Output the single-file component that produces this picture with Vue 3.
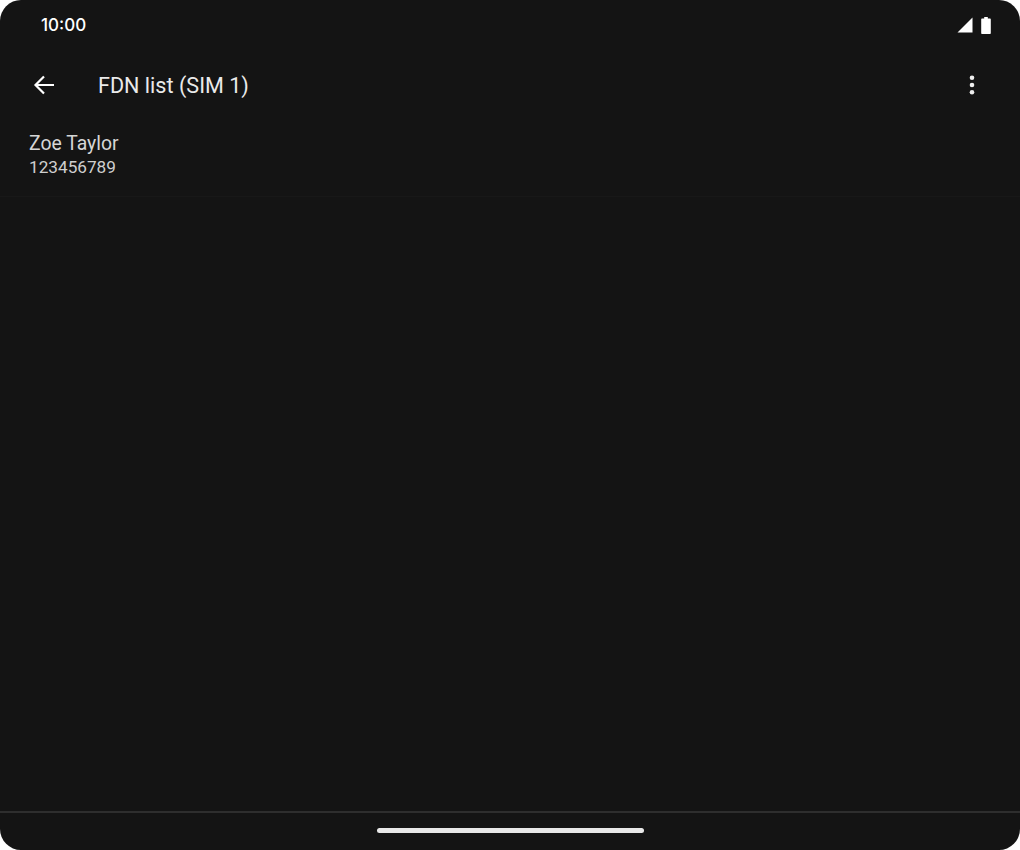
<template>
  <div class="screen">
    <div class="status-bar">
      <span class="status-bar__time">10:00</span>
      <div class="status-bar__icons">
        <svg width="16" height="16" viewBox="0 0 16 16"><path d="M15.500 0.500v15H0.500z" fill="#fff" /></svg>
        <svg width="10" height="17" viewBox="0 0 10 17"><path d="M3.200 0h3.600v1.500h2c.6 0 1 .4 1 1v13.500c0 .6-.4 1-1 1H1.200c-.6 0-1-.4-1-1V2.500c0-.6.4-1 1-1h2z" fill="#fff" /></svg>
      </div>
    </div>

    <div class="toolbar">
      <svg class="toolbar__back" width="24" height="24" viewBox="0 0 24 24"><path d="M22 12H3.500M12 3.500 3.500 12l8.500 8.500" fill="none" stroke="#fff" stroke-width="2.200" /></svg>
      <span class="toolbar__title">FDN list (SIM 1)</span>
      <svg class="toolbar__more" width="24" height="24" viewBox="0 0 24 24"><circle cx="12" cy="4.800" r="2.300" fill="#eee" /><circle cx="12" cy="12" r="2.300" fill="#eee" /><circle cx="12" cy="19.200" r="2.300" fill="#eee" /></svg>
    </div>

    <div class="contact">
      <div class="contact__name">Zoe Taylor</div>
      <div class="contact__number">123456789</div>
    </div>

    <div class="spacer"></div>

    <div class="nav-bar">
      <div class="nav-bar__handle"></div>
    </div>
  </div>
</template>

<script setup>
</script>

<style>
html, body {
  margin: 0;
  background: #fff;
}
</style>

<style scoped>
.screen {
  width: 1020px;
  height: 850px;
  display: flex;
  flex-direction: column;
  overflow: hidden;
  border-radius: 21px;
  background: #141414;
  font-family: Roboto, "Liberation Sans", sans-serif;
}

.status-bar {
  height: 50px;
  display: flex;
  align-items: center;
  justify-content: space-between;
  padding: 0 29px 0 41px;
  flex-shrink: 0;
}

.status-bar__time {
  font-family: Inter, Roboto, sans-serif;
  font-size: 17px;
  font-weight: 500;
  color: #fff;
}

.status-bar__icons {
  display: flex;
  align-items: center;
  gap: 8px;
}

.toolbar {
  height: 70px;
  display: flex;
  align-items: center;
  padding: 0 36px 0 32px;
  flex-shrink: 0;
}

.toolbar__title {
  margin-left: 42px;
  font-size: 21.600px;
  color: #eaeaea;
}

.toolbar__more {
  margin-left: auto;
}

.contact {
  height: 77px;
  padding: 11px 29px 0;
  box-sizing: border-box;
  border-bottom: 1px solid #181818;
  flex-shrink: 0;
}

.contact__name {
  font-size: 19.400px;
  line-height: 26px;
  color: #d6d6d6;
}

.contact__number {
  font-size: 17.200px;
  line-height: 20px;
  color: #cfcfcf;
}

.spacer {
  flex: 1;
}

.nav-bar {
  height: 39px;
  box-sizing: border-box;
  border-top: 2px solid #2e2e2e;
  display: flex;
  justify-content: center;
  padding-top: 15px;
  flex-shrink: 0;
}

.nav-bar__handle {
  width: 267px;
  height: 5px;
  border-radius: 3px;
  background: #e8e8e8;
}
</style>
